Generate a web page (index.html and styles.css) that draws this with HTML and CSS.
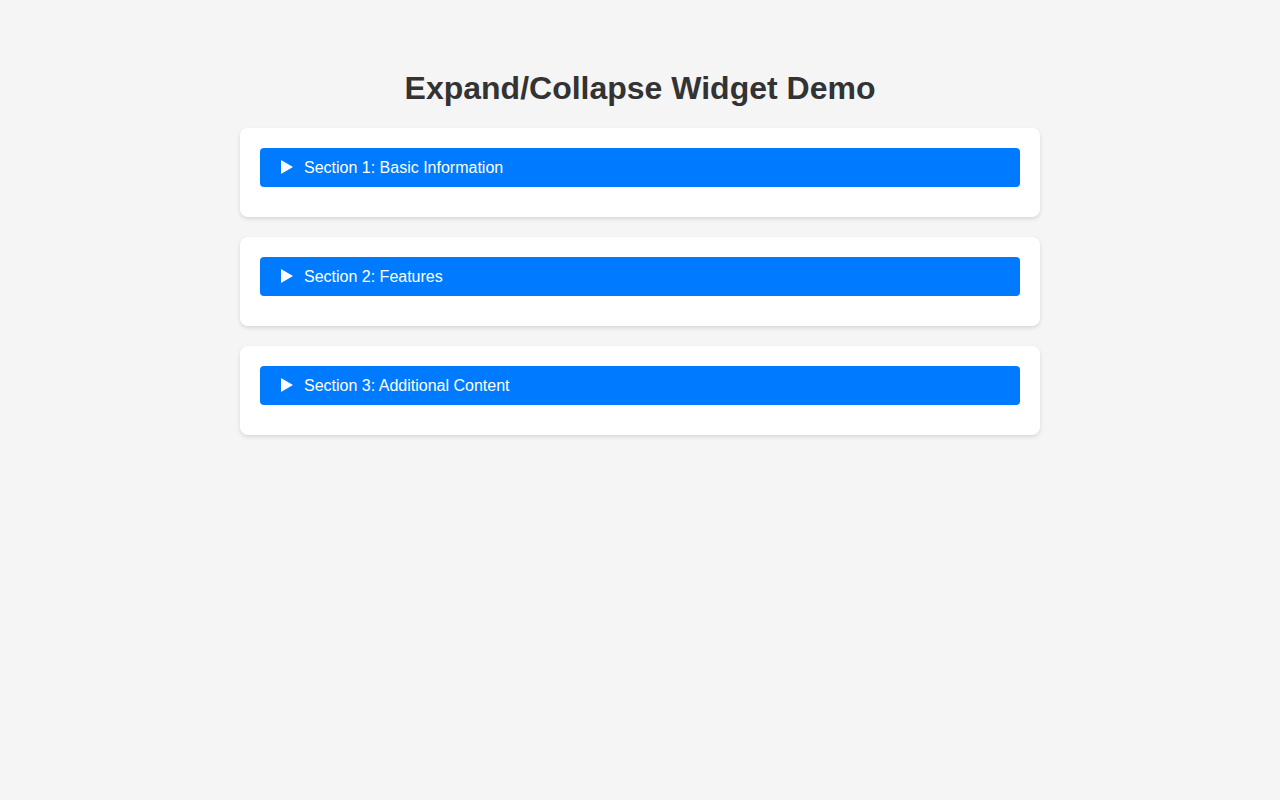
FILE: index.html
```html
<!DOCTYPE html>
<html lang="en">
<head>
<meta charset="utf-8">
<title>Expand/Collapse Widget Demo</title>
<link rel="stylesheet" href="styles.css">
</head>
<body>
<main class="container">
  <h1 class="title">Expand/Collapse Widget Demo</h1>
  <details class="card">
    <summary class="summary"><svg class="arrow" viewBox="0 0 12 14" width="12" height="14"><path d="M0 0 L12 7 L0 14 Z" fill="#fff"/></svg><span>Section 1: Basic Information</span></summary>
  </details>
  <details class="card">
    <summary class="summary"><svg class="arrow" viewBox="0 0 12 14" width="12" height="14"><path d="M0 0 L12 7 L0 14 Z" fill="#fff"/></svg><span>Section 2: Features</span></summary>
  </details>
  <details class="card">
    <summary class="summary"><svg class="arrow" viewBox="0 0 12 14" width="12" height="14"><path d="M0 0 L12 7 L0 14 Z" fill="#fff"/></svg><span>Section 3: Additional Content</span></summary>
  </details>
</main>
</body>
</html>
```
FILE: styles.css
```css
html, body {
  margin: 0;
  padding: 0;
  background: #f5f5f5;
  font-family: "Liberation Sans", Arial, sans-serif;
  color: #333;
}
.container {
  width: 800px;
  margin: 0 auto;
  padding-top: 48px;
}
.title {
  font-size: 32px;
  font-weight: bold;
  text-align: center;
  margin: 22px 0 21px;
  line-height: 37px;
  color: #333;
}
.card {
  background: #fff;
  border-radius: 8px;
  box-shadow: 0 2px 4px rgba(0,0,0,0.12);
  padding: 20px 20px 30px;
  margin-bottom: 20px;
}
.summary {
  list-style: none;
  display: flex;
  align-items: center;
  gap: 11px;
  background: #007bff;
  color: #fff;
  border-radius: 4px;
  padding: 0 20px 0 21px;
  height: 39px;
  font-size: 16px;
  cursor: pointer;
}
.summary::-webkit-details-marker { display: none; }
.arrow { flex: none; margin-top: -1px; }
```
